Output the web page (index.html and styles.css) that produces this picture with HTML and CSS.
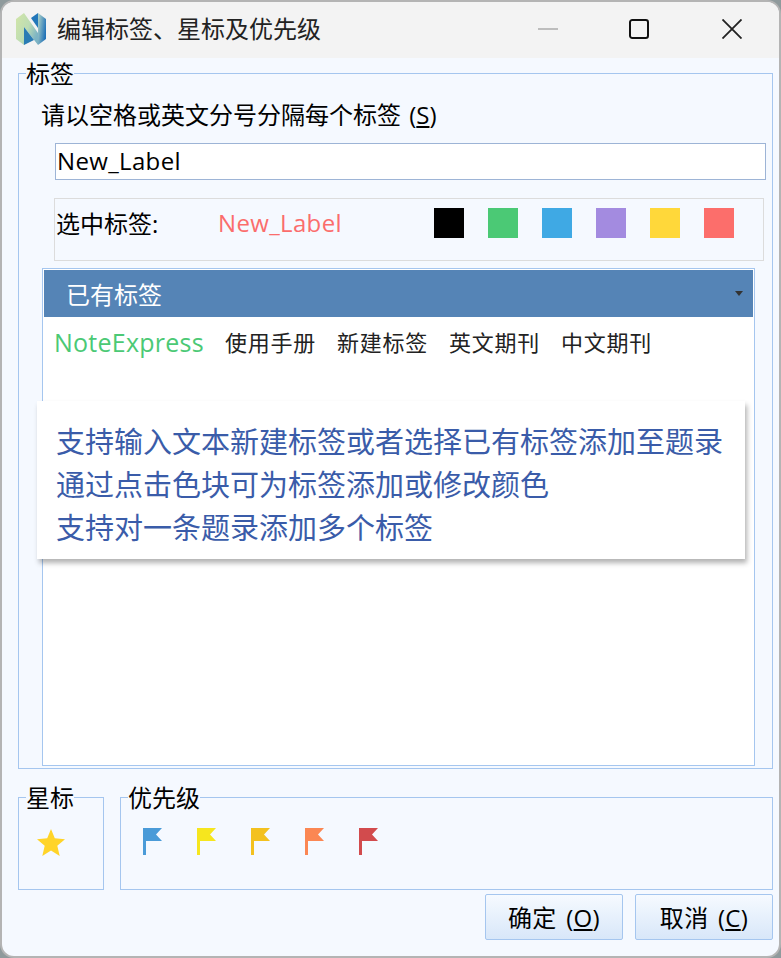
FILE: index.html
```html
<!DOCTYPE html>
<html lang="zh-CN">
<head>
    <meta charset="UTF-8">
    <title>编辑标签、星标及优先级</title>
    <link rel="stylesheet" href="styles.css">
</head>
<body>
    <div class="window">
        <div class="titlebar">
            <svg class="logo" viewBox="0 0 32 32">
                <defs>
                    <linearGradient id="logoLeft" x1="0" y1="0" x2="1" y2="0.6">
                        <stop offset="0" stop-color="#d3e6a8"/>
                        <stop offset="0.6" stop-color="#bcdcb4"/>
                        <stop offset="1" stop-color="#7db4c4"/>
                    </linearGradient>
                    <linearGradient id="logoRight" x1="0" y1="0" x2="1" y2="0.5">
                        <stop offset="0" stop-color="#b4d6c8"/>
                        <stop offset="1" stop-color="#2273b8"/>
                    </linearGradient>
                </defs>
                <path d="M1 6 L9 0 L23 20 L23 32 L9 14 L9 32 L1 26 Z" fill="url(#logoLeft)"/>
                <path d="M9 14 L19 27 L9 32 Z" fill="#2a7cb4"/>
                <path d="M16 5 L23 0 L23 15 Z" fill="#2277ba"/>
                <path d="M23 0 L31 6 L31 26 L23 32 Z" fill="url(#logoRight)"/>
            </svg>
            <span class="title">编辑标签、星标及优先级</span>
            <div class="window-buttons">
                <svg class="win-btn" viewBox="0 0 22 22"><path d="M0 11 H22" stroke="#bdbdbd" stroke-width="2"/></svg>
                <svg class="win-btn" viewBox="0 0 22 22"><rect x="1.1" y="1.1" width="19.8" height="19.8" rx="2.5" fill="none" stroke="#111" stroke-width="2.2"/></svg>
                <svg class="win-btn close" viewBox="0 0 22 22"><path d="M0.5 0.5 L21.5 21.5 M21.5 0.5 L0.5 21.5" stroke="#222" stroke-width="2"/></svg>
            </div>
        </div>

        <div class="content">
            <fieldset class="group tags-group">
                <legend>标签</legend>
                <div class="hint">请以空格或英文分号分隔每个标签 (<u>S</u>)</div>
                <input class="tag-input" type="text" value="New_Label">
                <div class="selected-row">
                    <span class="selected-label">选中标签:</span>
                    <span class="selected-name">New_Label</span>
                    <div class="swatches">
                        <span class="swatch black"></span>
                        <span class="swatch green"></span>
                        <span class="swatch blue"></span>
                        <span class="swatch purple"></span>
                        <span class="swatch yellow"></span>
                        <span class="swatch red"></span>
                    </div>
                </div>
                <div class="tag-box">
                    <div class="tag-header">
                        <span>已有标签</span>
                        <span class="caret"></span>
                    </div>
                    <div class="tag-list">
                        <span class="tag tag-green">NoteExpress</span>
                        <span class="tag">使用手册</span>
                        <span class="tag">新建标签</span>
                        <span class="tag">英文期刊</span>
                        <span class="tag">中文期刊</span>
                    </div>
                </div>
            </fieldset>

            <div class="bottom-row">
                <fieldset class="group star-group">
                    <legend>星标</legend>
                    <svg class="star" viewBox="0 0 28 27"><path d="M14 0 L17.8 9.2 L28 10.2 L20.3 16.8 L22.7 27 L14 21.6 L5.3 27 L7.7 16.8 L0 10.2 L10.2 9.2 Z" fill="#ffd429"/></svg>
                </fieldset>
                <fieldset class="group priority-group">
                    <legend>优先级</legend>
                    <div class="flags">
                        <svg class="flag" viewBox="0 0 19 27" fill="#4a9bd8"><path d="M0 0 H19 L13 6.5 L19 13 H3 V27 H0 Z"/></svg>
                        <svg class="flag" viewBox="0 0 19 27" fill="#f6e61e"><path d="M0 0 H19 L13 6.5 L19 13 H3 V27 H0 Z"/></svg>
                        <svg class="flag" viewBox="0 0 19 27" fill="#f3c11f"><path d="M0 0 H19 L13 6.5 L19 13 H3 V27 H0 Z"/></svg>
                        <svg class="flag" viewBox="0 0 19 27" fill="#fb8753"><path d="M0 0 H19 L13 6.5 L19 13 H3 V27 H0 Z"/></svg>
                        <svg class="flag" viewBox="0 0 19 27" fill="#d24b4d"><path d="M0 0 H19 L13 6.5 L19 13 H3 V27 H0 Z"/></svg>
                    </div>
                </fieldset>
            </div>

            <div class="actions">
                <button class="btn">确定 (<u>O</u>)</button>
                <button class="btn">取消 (<u>C</u>)</button>
            </div>

            <div class="tooltip">
                支持输入文本新建标签或者选择已有标签添加至题录<br>
                通过点击色块可为标签添加或修改颜色<br>
                支持对一条题录添加多个标签
            </div>
        </div>
    </div>
</body>
</html>
```

FILE: styles.css
```css
* {
    box-sizing: border-box;
}

html, body {
    margin: 0;
    height: 100%;
}

body {
    background-color: #8f9a9c;
    font-family: "Open Sans", "Noto Sans CJK SC", sans-serif;
    font-size: 24px;
    color: #000;
    overflow: hidden;
}

.window {
    height: 958px;
    border: 2px solid #b4b4b4;
    border-radius: 14px;
    overflow: hidden;
    display: flex;
    flex-direction: column;
    background-color: #f5f9ff;
}

.titlebar {
    height: 56px;
    flex: none;
    background-color: #f3f3f3;
    display: flex;
    align-items: center;
    padding: 0 0 2px 13px;
}

.logo {
    width: 32px;
    height: 32px;
    margin-right: 11px;
}

.title {
    color: #222;
    margin: 0 0 3px -1px;
}

.window-buttons {
    margin-left: auto;
    display: flex;
    align-items: center;
    gap: 71px;
    padding-right: 37px;
}

.win-btn {
    width: 20px;
    height: 20px;
}

.win-btn.close {
    margin-left: 2px;
}

.content {
    position: relative;
    flex: 1;
    padding: 1px 6px 0 16px;
}

.group {
    margin: 0;
    padding: 0;
    min-width: 0;
    border: 1px solid #a5c6ef;
}

.group legend {
    margin-left: 7px;
    padding: 3px 0 1px;
    line-height: 24px;
}

.tags-group {
    height: 710px;
    padding: 0 17px 0 23px;
}

.tags-group legend {
    margin-left: -16px;
}

.hint {
    line-height: 32px;
    margin: 12px 0 0 -1px;
    word-spacing: 2px;
}

.tag-input {
    display: block;
    width: 711px;
    height: 37px;
    margin: 12px 0 0 13px;
    padding: 0 1px 3px;
    border: 1px solid #9db4d6;
    background-color: #fff;
    font: inherit;
    letter-spacing: 0.35px;
}

.selected-row {
    width: 710px;
    height: 63px;
    margin: 18px 0 0 12px;
    padding: 0 0 14px 1px;
    border: 1px solid #dcdcdc;
    display: flex;
    align-items: center;
}

.selected-label {
    width: 162px;
}

.selected-name {
    width: 216px;
    color: #fb6d6c;
    letter-spacing: 0.35px;
}

.swatches {
    display: flex;
    gap: 24px;
}

.swatch {
    width: 30px;
    height: 30px;
}

.black { background-color: #000; }
.green { background-color: #4bc975; }
.blue { background-color: #3fa9e4; }
.purple { background-color: #a38be0; }
.yellow { background-color: #ffd83a; }
.red { background-color: #fc6e6b; }

.tag-box {
    width: 713px;
    height: 498px;
    margin-top: 7px;
    border: 1px solid #a5c6ef;
    background-color: #fff;
    padding: 1px;
}

.tag-header {
    height: 47px;
    background-color: #5584b6;
    color: #fff;
    display: flex;
    align-items: center;
    justify-content: space-between;
    padding: 0 10px 0 22px;
}

.caret {
    width: 0;
    height: 0;
    border-left: 4px solid transparent;
    border-right: 4px solid transparent;
    border-top: 5px solid #333;
}

.tag-list {
    display: flex;
    gap: 21px;
    padding: 8px 0 0 10px;
    line-height: 34px;
}

.tag {
    color: #222;
    letter-spacing: 0.75px;
    font-size: 22px;
}

.tag-green {
    color: #4bc975;
    font-size: 25px;
    letter-spacing: 0.25px;
}

.bottom-row {
    display: flex;
    gap: 16px;
    margin-top: 14px;
}

.star-group {
    width: 86px;
    height: 107px;
}

.star {
    display: block;
    width: 28px;
    height: 27px;
    margin: 18px 0 0 18px;
}

.priority-group {
    flex: 1;
    height: 107px;
}

.flags {
    display: flex;
    gap: 35px;
    margin: 17px 0 0 22px;
}

.flag {
    width: 19px;
    height: 27px;
}

.actions {
    display: flex;
    justify-content: flex-end;
    gap: 12px;
    margin-top: 4px;
}

.btn {
    width: 138px;
    height: 46px;
    padding: 0 0 2px;
    border: 1px solid #a5c6ef;
    border-radius: 2px;
    background: linear-gradient(#f6faff, #d8e7f9);
    font: inherit;
    color: #000;
    word-spacing: 3px;
    letter-spacing: 0.3px;
}

.tooltip {
    position: absolute;
    left: 35px;
    top: 343px;
    width: 708px;
    height: 158px;
    padding: 19px 0 0 19px;
    background-color: #fff;
    box-shadow: 2px 4px 5px rgba(0,0,0,0.3);
    color: #3a5ca9;
    font-size: 29px;
    line-height: 43px;
    white-space: nowrap;
}
```
